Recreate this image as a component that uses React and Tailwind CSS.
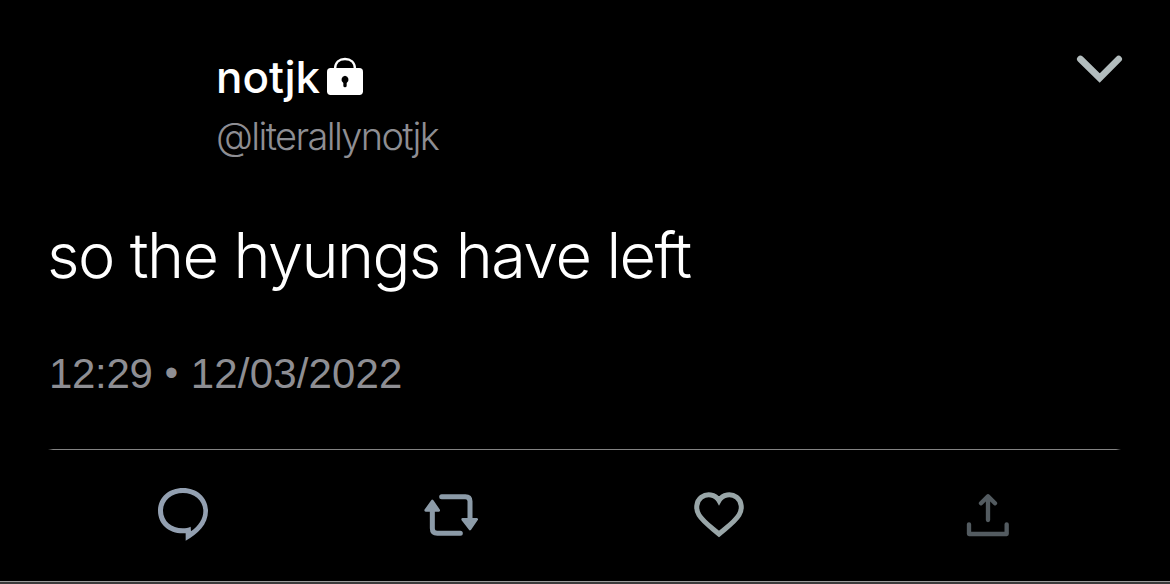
const LockIcon = () => {
    return (
        <svg className="w-[38px] h-[40px] shrink-0" viewBox="0 0 114 120" fill="none">
            <path d="M27 36C27 15 41 6 57 6C73 6 87 15 87 36" stroke="#fff" strokeWidth="7" />
            <rect x="3" y="33" width="108" height="81" rx="11" fill="#fff" />
            <path d="M57 56a12 12 0 0 1 5 22v8a5 5 0 0 1-10 0V78a12 12 0 0 1 5-22z" fill="#000" />
        </svg>
    );
};

const ChevronIcon = () => {
    return (
        <svg className="w-[80px] h-[60px]" viewBox="0 0 240 180" fill="none">
            <path d="M61 57L119 114L176 57" stroke="#b3bdbe" strokeWidth="20" strokeLinecap="round" />
        </svg>
    );
};

const ReplyIcon = () => {
    return (
        <svg className="w-[90px] h-[80px]" viewBox="0 0 270 240">
            <path fillRule="evenodd" fill="#93a0b1" d="M129 39C172 39 204 68 204 108C204 148 174 176 137 197V175H128C86 175 54 147 54 107C54 68 86 39 129 39ZM129 54C95 54 69 77 69 107C69 138 95 160 128 160C137 160 145 158 152 155L153 169C176 152 190 132 190 108C190 77 163 54 129 54Z" />
        </svg>
    );
};

const RetweetIcon = () => {
    return (
        <svg className="w-[90px] h-[80px]" viewBox="0 0 270 240" fill="none" stroke="#8c9ba8" strokeLinecap="round" strokeLinejoin="round">
            <path d="M95 65H166Q180 65 180 79V135" strokeWidth="15" />
            <path d="M151 175H82Q67 175 67 160V100" strokeWidth="15" />
            <path d="M67 78L86 106H47ZM180 162L200 133H158Z" fill="#8c9ba8" strokeWidth="8" />
        </svg>
    );
};

const LikeIcon = () => {
    return (
        <svg className="w-[90px] h-[80px]" viewBox="0 0 270 240" fill="none">
            <path d="M132 77C121 57 95 55 79 67C62 80 62 104 72 120C85 141 110 158 132 177C154 158 179 141 192 120C202 104 202 80 185 67C169 55 143 57 132 77Z" stroke="#99a6a8" strokeWidth="15" />
        </svg>
    );
};

const ShareIcon = () => {
    return (
        <svg className="w-[90px] h-[80px]" viewBox="0 0 270 240" fill="none" stroke="#535b60" strokeWidth="13" strokeLinecap="round" strokeLinejoin="round">
            <path d="M129 135V66M108 85L129 64L150 85" />
            <path d="M72 148V177H185V148" />
        </svg>
    );
};

const App = () => {
    return (
        <div className="w-[1170px] h-[584px] bg-black overflow-hidden flex flex-col font-[Inter,sans-serif]">
            <header className="flex justify-between h-[219px] pl-[216px] pr-[30px]">
                <div className="pt-[53px] whitespace-nowrap">
                    <div className="flex items-center h-12">
                        <span className="w-[110px] text-[44px] leading-[48px] font-medium text-white">notjk</span>
                        <LockIcon />
                    </div>
                    <div className="mt-[11px] text-[38px] leading-[48px] tracking-[-1.65px] font-light text-[#8e8e93]">@literallynotjk</div>
                </div>
                <button type="button" className="mt-10 h-[60px]" aria-label="More">
                    <ChevronIcon />
                </button>
            </header>

            <main className="px-12">
                <p className="-ml-px h-[72px] text-[63px] leading-[72px] tracking-[-1.6px] font-light text-white whitespace-nowrap">so the hyungs have left</p>
                <p className="mt-[59px] pl-px h-12 flex text-[42px] leading-[48px] text-[#8e8e93] whitespace-pre font-['Liberation_Sans',sans-serif]">
                    <span className="w-[115px] tracking-[-0.3px]">12:29 </span>
                    <span className="w-[15px] flex justify-center text-[38px] leading-[46px]">•</span>
                    <span className="tracking-[0.15px]"> 12/03/2022</span>
                </p>
                <div className="mt-[51px] mr-px h-px bg-[linear-gradient(to_right,transparent,#838383_5px,#838383_calc(100%-5px),transparent)]"></div>
            </main>

            <footer className="mt-[25px] flex pl-[140px]">
                <ReplyIcon />
                <div className="ml-[180px]"><RetweetIcon /></div>
                <div className="ml-[175px]"><LikeIcon /></div>
                <div className="ml-[180px]"><ShareIcon /></div>
            </footer>

            <div className="mt-auto h-[3px] border-t border-[#9a9a9a] bg-[#3a3a3a] shrink-0"></div>
        </div>
    );
};
export default App
